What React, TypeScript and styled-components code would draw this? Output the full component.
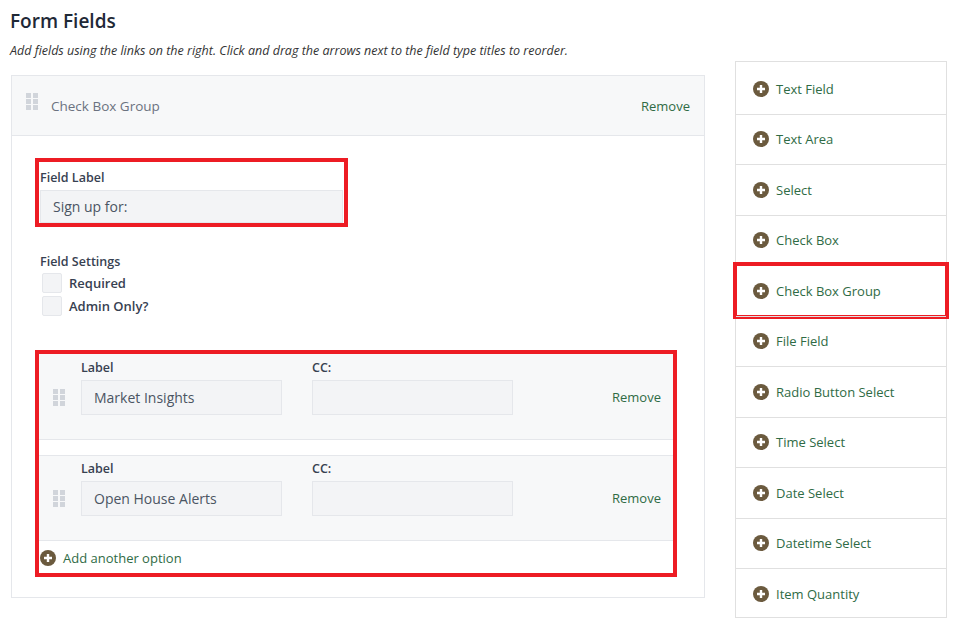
import styled, { createGlobalStyle } from 'styled-components'

const Global = createGlobalStyle`
    body {
        margin: 0;
        font-family: "Open Sans", "Noto Sans", sans-serif;
        color: #374151;
        background: #fff;
    }
`

const Page = styled.div`
    display: flex;
    gap: 30px;
    padding: 8px 0 0 11px;
    width: 958px;
    box-sizing: border-box;
`

const Main = styled.div`
    width: 694px;
`

const Title = styled.h1`
    margin: 0 0 0 -1px;
    font-size: 19px;
    font-weight: 600;
    color: #1f2937;
    line-height: 26px;
`

const Intro = styled.p`
    margin: 8px 0 16px -1px;
    font-size: 12.5px;
    font-style: italic;
    color: #333;
`

const Panel = styled.div`
    border: 1px solid #e5e7eb;
    height: 523px;
    box-sizing: border-box;
`

const PanelHead = styled.div`
    display: flex;
    align-items: center;
    height: 59px;
    padding: 0 14px 0 14px;
    background: #f7f8f9;
    border-bottom: 1px solid #e5e7eb;
    font-size: 13.5px;
    color: #6b7280;
`

const HeadTitle = styled.span`
    margin-left: 13px;
    flex: 1;
`

const RemoveLink = styled.a`
    color: #2f6b45;
    font-size: 13px;
    cursor: pointer;
`

const Body = styled.div`
    padding: 22px 0 0 23px;
`

const Highlight = styled.div<{ $w: number }>`
    width: ${(p) => p.$w}px;
    border: 4px solid #ed1c24;
    box-sizing: border-box;
`

const BoldLabel = styled.div`
    font-size: 12.5px;
    font-weight: 600;
    color: #374151;
`

const LabelBlock = styled.div`
    padding: 7px 0 0 1px;
`

const TextInput = styled.div<{ $w: number }>`
    width: ${(p) => p.$w}px;
    height: 33px;
    margin-top: 4px;
    background: #f3f4f6;
    border: 1px solid #e5e7eb;
    box-sizing: border-box;
    padding: 0 12px;
    display: flex;
    align-items: center;
    font-size: 14px;
    color: #4b5563;
`

const Settings = styled.div`
    margin: 26px 0 34px 5px;
`

const CheckRow = styled.label`
    display: flex;
    align-items: center;
    gap: 7px;
    margin-top: 3px;
    font-size: 13px;
    font-weight: 600;
    color: #374151;
`

const Box = styled.span`
    width: 18px;
    height: 18px;
    background: #f3f4f6;
    border: 1px solid #e5e7eb;
    border-radius: 2px;
    margin-left: 2px;
`

const OptionRow = styled.div<{ $gap?: boolean }>`
    display: flex;
    align-items: flex-end;
    height: 86px;
    box-sizing: border-box;
    padding: 0 12px 24px 14px;
    background: #f7f8f9;
    border-top: 1px solid ${(p) => (p.$gap ? '#e5e7eb' : 'transparent')};
    border-bottom: 1px solid #e5e7eb;
    margin-top: ${(p) => (p.$gap ? '15px' : '0')};
`

const OptCol = styled.div`
    margin-left: 16px;
    margin-right: 14px;
`

const OptRemove = styled(RemoveLink)`
    margin-left: auto;
    margin-bottom: 9px;
`

const Handle = styled.div`
    display: grid;
    grid-template-columns: 5px 5px;
    gap: 1px 2px;
    margin-bottom: 9px;
    & span {
        width: 5px;
        height: 5px;
        background: #d1d5db;
    }
`

const AddOption = styled.div`
    display: flex;
    align-items: center;
    gap: 7px;
    padding: 8px 0 6px 1px;
    font-size: 13px;
    color: #2f6b45;
`

const Sidebar = styled.div`
    margin-top: 53px;
    width: 212px;
    border: 1px solid #e0e0e0;
    height: 557px;
    box-sizing: border-box;
`

const SideItem = styled.div<{ $active?: boolean }>`
    display: flex;
    align-items: center;
    gap: 7px;
    height: 50.5px;
    padding-left: 17px;
    box-sizing: border-box;
    border-top: 1px solid #e0e0e0;
    &:first-child {
        border-top: none;
        height: 51.5px;
        padding-top: 2px;
    }
    font-size: 13px;
    color: #2f6b45;
    outline: ${(p) => (p.$active ? '4px solid #ed1c24' : 'none')};
    outline-offset: -1px;
    position: relative;
`

const PlusIcon = () => (
    <svg width="16" height="16" viewBox="0 0 16 16">
        <circle cx="8" cy="8" r="8" fill="#6b5a3e" />
        <path d="M8 4v8M4 8h8" stroke="#fff" strokeWidth="2.4" />
    </svg>
)

const DragHandle = () => (
    <Handle>
        {[0, 1, 2, 3, 4, 5].map((i) => (
            <span key={i} />
        ))}
    </Handle>
)

const fields = [
    'Text Field',
    'Text Area',
    'Select',
    'Check Box',
    'Check Box Group',
    'File Field',
    'Radio Button Select',
    'Time Select',
    'Date Select',
    'Datetime Select',
    'Item Quantity',
]

const options = ['Market Insights', 'Open House Alerts']

const App = () => {
    return (
        <>
            <Global />
            <Page>
                <Main>
                    <Title>Form Fields</Title>
                    <Intro>
                        Add fields using the links on the right. Click and drag the arrows next to the field type titles to reorder.
                    </Intro>
                    <Panel>
                        <PanelHead>
                            <DragHandle />
                            <HeadTitle>Check Box Group</HeadTitle>
                            <RemoveLink>Remove</RemoveLink>
                        </PanelHead>
                        <Body>
                            <Highlight $w={313}>
                                <LabelBlock>
                                    <BoldLabel>Field Label</BoldLabel>
                                    <TextInput $w={303}>Sign up for:</TextInput>
                                </LabelBlock>
                            </Highlight>
                            <Settings>
                                <BoldLabel>Field Settings</BoldLabel>
                                <CheckRow>
                                    <Box />
                                    Required
                                </CheckRow>
                                <CheckRow>
                                    <Box />
                                    Admin Only?
                                </CheckRow>
                            </Settings>
                            <Highlight $w={642}>
                                {options.map((o, i) => (
                                    <OptionRow key={o} $gap={i > 0}>
                                        <DragHandle />
                                        <OptCol>
                                            <BoldLabel>Label</BoldLabel>
                                            <TextInput $w={201} style={{ height: 35 }}>
                                                {o}
                                            </TextInput>
                                        </OptCol>
                                        <OptCol>
                                            <BoldLabel>CC:</BoldLabel>
                                            <TextInput $w={201} style={{ height: 35 }} />
                                        </OptCol>
                                        <OptRemove>Remove</OptRemove>
                                    </OptionRow>
                                ))}
                                <AddOption>
                                    <PlusIcon />
                                    Add another option
                                </AddOption>
                            </Highlight>
                        </Body>
                    </Panel>
                </Main>
                <Sidebar>
                    {fields.map((f) => (
                        <SideItem key={f} $active={f === 'Check Box Group'}>
                            <PlusIcon />
                            {f}
                        </SideItem>
                    ))}
                </Sidebar>
            </Page>
        </>
    )
}

export default App
